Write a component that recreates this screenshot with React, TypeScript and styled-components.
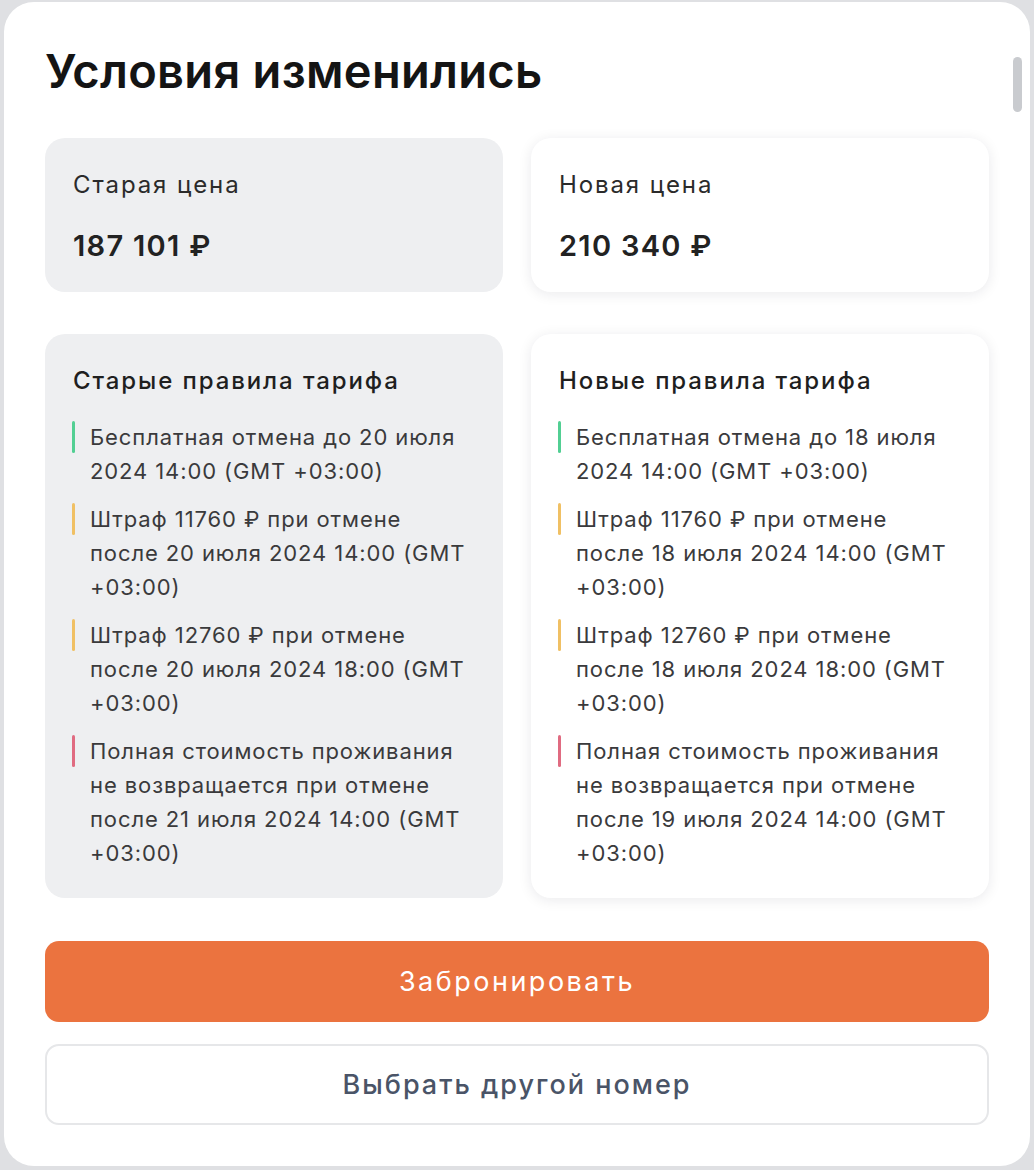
import { createGlobalStyle, styled } from 'styled-components';

const GlobalStyle = createGlobalStyle`
  html, body {
    margin: 0;
    padding: 0;
    background: #dfe0e3;
    font-family: Inter, "Noto Sans", "Liberation Sans", sans-serif;
  }
`;

const Page = styled.div`
  padding: 2px 4px 4px 4px;
`;

const Modal = styled.div`
  position: relative;
  box-sizing: border-box;
  height: 1164px;
  background: #ffffff;
  border-radius: 30px;
  padding: 42px 41px 43px 41px;
  display: flex;
  flex-direction: column;
`;

const Scrollbar = styled.div`
  position: absolute;
  top: 55px;
  right: 8px;
  width: 9px;
  height: 55px;
  border-radius: 5px;
  background: #c9cbcf;
`;

const Title = styled.h1`
  margin: 0 0 40px;
  font-size: 47px;
  line-height: 54px;
  font-weight: 600;
  color: #141414;
  letter-spacing: 0.3px;
`;

const Row = styled.div`
  display: grid;
  grid-template-columns: 1fr 1fr;
  gap: 28px;
  margin-bottom: 42px;
`;

const Card = styled.div<{ $fresh?: boolean }>`
  box-sizing: border-box;
  border-radius: 20px;
  padding: 31px 28px 28px;
  background: ${(p) => (p.$fresh ? '#ffffff' : '#eeeff1')};
  box-shadow: ${(p) => (p.$fresh ? '0 2px 14px rgba(20, 25, 40, 0.09)' : 'none')};
`;

const PriceLabel = styled.div`
  font-size: 24px;
  line-height: 30px;
  letter-spacing: 1.9px;
  color: #2b2b2b;
  margin-top: 1px;
`;

const PriceValue = styled.div`
  margin: 30px 0 2px;
  font-size: 29px;
  line-height: 32px;
  font-weight: 600;
  letter-spacing: 1.3px;
  color: #222;
`;

const RulesTitle = styled.div`
  font-size: 24px;
  line-height: 32px;
  font-weight: 500;
  letter-spacing: 1.9px;
  color: #1f1f1f;
  margin-bottom: 23px;
`;

const RuleList = styled.ul`
  list-style: none;
  margin: 0;
  padding: 0;
  display: flex;
  flex-direction: column;
  gap: 14px;
`;

const barColors = {
  free: '#52cf93',
  fine: '#f0c064',
  full: '#e06b81',
};

const Rule = styled.li<{ $kind: keyof typeof barColors }>`
  position: relative;
  padding-left: 17px;
  font-size: 22px;
  line-height: 34px;
  letter-spacing: 0.9px;
  color: #3a3a3c;

  &::before {
    content: '';
    position: absolute;
    left: -1px;
    top: 1px;
    width: 3px;
    height: 32px;
    border-radius: 2px;
    background: ${(p) => barColors[p.$kind]};
  }
`;

const Actions = styled.div`
  margin-top: 1px;
  display: flex;
  flex-direction: column;
  gap: 22px;
`;

const Button = styled.button<{ $primary?: boolean }>`
  height: 81px;
  border-radius: 14px;
  font-family: inherit;
  font-size: 27px;
  letter-spacing: ${(p) => (p.$primary ? '2.5px' : '2px')};
  font-weight: ${(p) => (p.$primary ? 400 : 500)};
  cursor: pointer;
  background: ${(p) => (p.$primary ? '#eb733f' : '#ffffff')};
  color: ${(p) => (p.$primary ? '#ffffff' : '#4a5467')};
  border: ${(p) => (p.$primary ? 'none' : '2px solid #e6e7e9')};
`;

type RuleItem = { kind: keyof typeof barColors; text: string };

const oldRules: RuleItem[] = [
  { kind: 'free', text: 'Бесплатная отмена до 20 июля 2024 14:00 (GMT +03:00)' },
  { kind: 'fine', text: 'Штраф 11760 ₽ при отмене после 20 июля 2024 14:00 (GMT +03:00)' },
  { kind: 'fine', text: 'Штраф 12760 ₽ при отмене после 20 июля 2024 18:00 (GMT +03:00)' },
  {
    kind: 'full',
    text: 'Полная стоимость проживания не возвращается при отмене после 21 июля 2024 14:00 (GMT +03:00)',
  },
];

const newRules: RuleItem[] = [
  { kind: 'free', text: 'Бесплатная отмена до 18 июля 2024 14:00 (GMT +03:00)' },
  { kind: 'fine', text: 'Штраф 11760 ₽ при отмене после 18 июля 2024 14:00 (GMT +03:00)' },
  { kind: 'fine', text: 'Штраф 12760 ₽ при отмене после 18 июля 2024 18:00 (GMT +03:00)' },
  {
    kind: 'full',
    text: 'Полная стоимость проживания не возвращается при отмене после 19 июля 2024 14:00 (GMT +03:00)',
  },
];

const RulesCard = ({ title, rules, fresh }: { title: string; rules: RuleItem[]; fresh?: boolean }) => (
  <Card $fresh={fresh}>
    <RulesTitle>{title}</RulesTitle>
    <RuleList>
      {rules.map((r, i) => (
        <Rule key={i} $kind={r.kind}>
          {r.text}
        </Rule>
      ))}
    </RuleList>
  </Card>
);

export default function App() {
  return (
    <Page>
      <GlobalStyle />
      <Modal>
        <Scrollbar />
        <Title>Условия изменились</Title>

        <Row>
          <Card>
            <PriceLabel>Старая цена</PriceLabel>
            <PriceValue>187 101 ₽</PriceValue>
          </Card>
          <Card $fresh>
            <PriceLabel>Новая цена</PriceLabel>
            <PriceValue>210 340 ₽</PriceValue>
          </Card>
        </Row>

        <Row>
          <RulesCard title="Старые правила тарифа" rules={oldRules} />
          <RulesCard title="Новые правила тарифа" rules={newRules} fresh />
        </Row>

        <Actions>
          <Button $primary>Забронировать</Button>
          <Button>Выбрать другой номер</Button>
        </Actions>
      </Modal>
    </Page>
  );
}
